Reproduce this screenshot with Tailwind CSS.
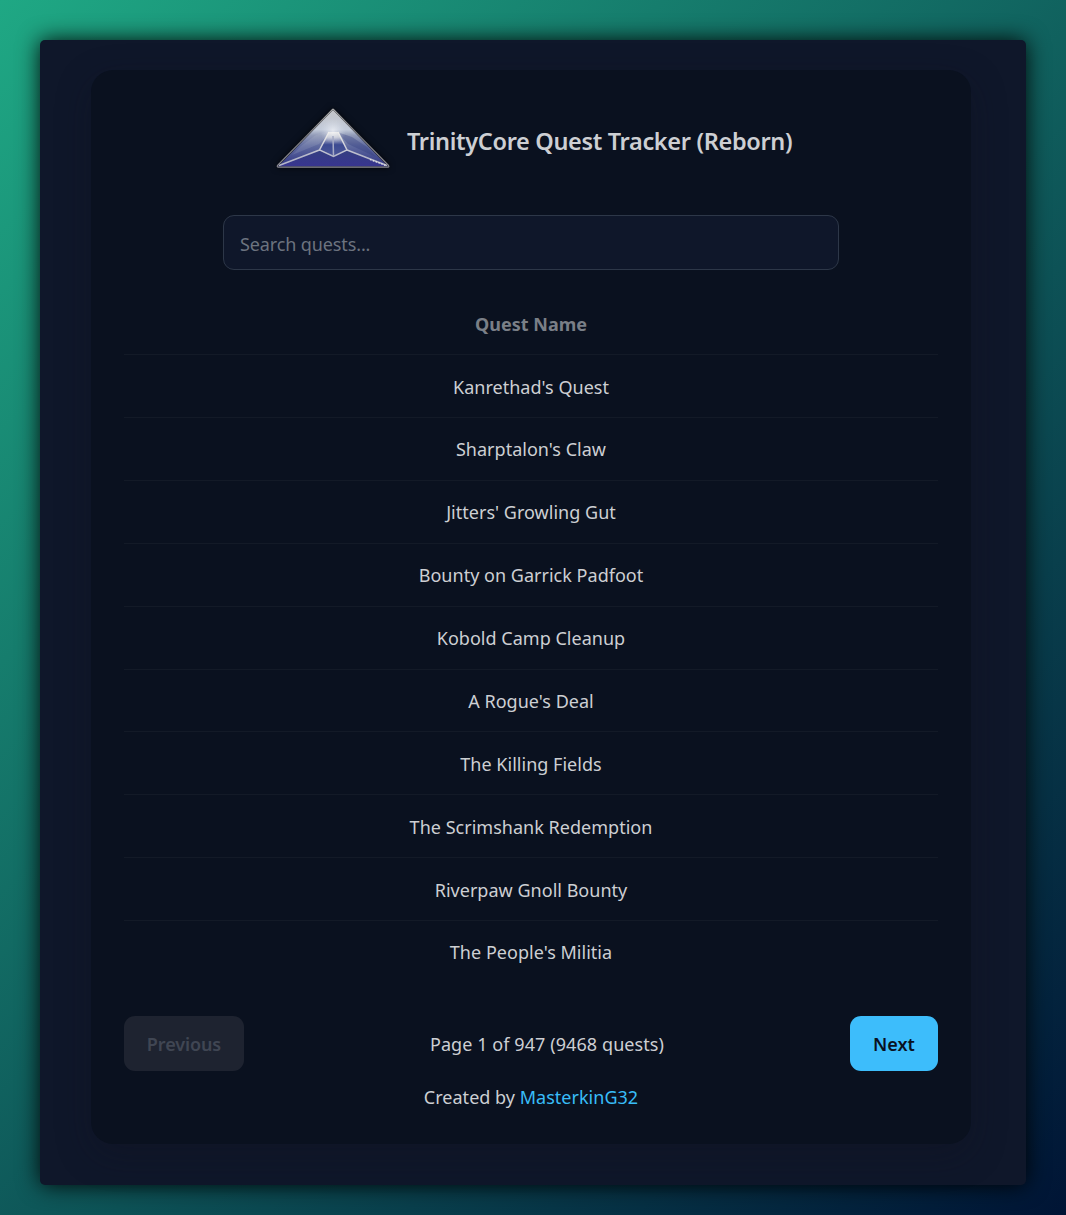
<!DOCTYPE html>
<html lang="en">
<head>
<meta charset="utf-8">
<title>TrinityCore Quest Tracker (Reborn)</title>
<script src="https://cdn.jsdelivr.net/npm/@tailwindcss/browser@4"></script>
</head>
<body class="h-[1215px] overflow-hidden bg-linear-[135deg,#1fa884,#001435] pt-10 pl-10 font-['Segoe_UI','Noto_Sans',sans-serif] text-[18px] leading-[27px] tracking-[0.02px] text-[#cdcfd3]">
<div class="h-[1145px] w-[986px] rounded-[5px] bg-[#0f172a] pt-[30px] pl-[51px] shadow-[0_0_22px_rgba(0,0,0,0.95)]">
<main class="flex h-[1074px] w-[880px] flex-col rounded-[22px] bg-[#0a111f] px-[33px] shadow-[0_11px_34px_rgba(18,16,32,0.35)]">
<header class="flex h-[145px] shrink-0 items-start pt-[34px] pl-[149px]">
<svg class="h-[70px] w-[120px] shrink-0 drop-shadow-[0_0_3px_rgba(0,0,0,0.8)]" viewBox="0 0 120 70" fill="none">
<defs>
<linearGradient id="face" x1="0" y1="5" x2="0" y2="62" gradientUnits="userSpaceOnUse"><stop stop-color="#c4c4c6"/><stop offset=".36" stop-color="#c3cbda"/><stop offset=".46" stop-color="#929bb8"/><stop offset=".65" stop-color="#5f6a9f"/><stop offset="1" stop-color="#303583"/></linearGradient>
<linearGradient id="base" x1="0" y1="46" x2="0" y2="63" gradientUnits="userSpaceOnUse"><stop stop-color="#343e80"/><stop offset="1" stop-color="#383590"/></linearGradient>
<linearGradient id="core" x1="0" y1="27" x2="0" y2="52" gradientUnits="userSpaceOnUse"><stop stop-color="#efeeea"/><stop offset=".25" stop-color="#c3c6d3"/><stop offset=".55" stop-color="#3c4a91"/><stop offset="1" stop-color="#4c5698"/></linearGradient>
<radialGradient id="glow" cx="60" cy="27" r="13" gradientUnits="userSpaceOnUse"><stop stop-color="#fff" stop-opacity=".6"/><stop offset="1" stop-color="#dce2ee" stop-opacity="0"/></radialGradient>
<linearGradient id="edge" x1="0" y1="5" x2="0" y2="63" gradientUnits="userSpaceOnUse"><stop stop-color="#a9a8a7"/><stop offset=".5" stop-color="#77777c"/><stop offset="1" stop-color="#8a8990"/></linearGradient>
<linearGradient id="rib" x1="0" y1="28" x2="0" y2="53" gradientUnits="userSpaceOnUse"><stop stop-color="#f0efec"/><stop offset="1" stop-color="#b4b6c8"/></linearGradient>
</defs>
<path d="M60 6 115 62.500H5Z" fill="url(#face)"/>
<path d="M58 27 43 31 28 42 19 51 46 40Z" fill="#c7cee0" opacity=".15"/>
<path d="M64 28 79 33 94 43 103 53 75 40Z" fill="#303d7d" opacity=".35"/>
<path d="M5 62 46.500 46 60 52.500 74 46 115 62Z" fill="url(#base)"/>
<path d="M56 28H65L74 46 60.500 52.500 46.500 46Z" fill="url(#core)"/>
<path d="M60 6 115 62.500H5Z" fill="url(#glow)"/>
<path d="M56 28 46.500 46 60.500 52.500 74 46 65 28M46.500 46 6 61.500M74 46 114 61.500" stroke="url(#rib)" stroke-width="1.500"/>
<path d="M60 32 60.500 52" stroke="#a5aac5" stroke-width="1.500"/>
<path d="M97 55.500 113 61.500" stroke="#e4e3e6" stroke-width="1.300" stroke-dasharray="1.500 1.500"/>
<path d="M60.500 5.500 115.500 61.500Q116.500 63 115 63.200H5Q3.500 62.500 5 61L59.500 5.500Q60 5 60.500 5.500Z" stroke="url(#edge)" stroke-width="1.200"/>
</svg>
<h1 class="mt-[19px] ml-[14px] text-[23.5px] leading-[36px] font-semibold tracking-[-0.33px] whitespace-nowrap">TrinityCore Quest Tracker (Reborn)</h1>
</header>
<input class="mx-auto block h-[55px] w-[616px] shrink-0 rounded-[11px] border border-[#2d3748] bg-[#0f172a] px-4 pt-0.5 tracking-[-0.12px] placeholder:text-[#6c737f]" placeholder="Search quests..." aria-label="Search quests">
<table class="mt-[22px] w-full border-collapse text-center">
<thead><tr class="h-[62.850px] border-b border-[#131a27]"><th class="pt-[3px] font-bold text-[#7a7f87]">Quest Name</th></tr></thead>
<tbody>
<tr class="h-[62.850px] border-b border-[#131a27]"><td class="pt-[2px]">Kanrethad's Quest</td></tr>
<tr class="h-[62.850px] border-b border-[#131a27]"><td class="pt-[1px]">Sharptalon's Claw</td></tr>
<tr class="h-[62.850px] border-b border-[#131a27]"><td class="pt-[2px]">Jitters' Growling Gut</td></tr>
<tr class="h-[62.850px] border-b border-[#131a27]"><td class="pt-[2px]">Bounty on Garrick Padfoot</td></tr>
<tr class="h-[62.850px] border-b border-[#131a27]"><td class="pt-[2px]">Kobold Camp Cleanup</td></tr>
<tr class="h-[62.850px] border-b border-[#131a27]"><td class="pt-[2px]">A Rogue's Deal</td></tr>
<tr class="h-[62.850px] border-b border-[#131a27]"><td class="pt-[2px]">The Killing Fields</td></tr>
<tr class="h-[62.850px] border-b border-[#131a27]"><td class="pt-[2px]">The Scrimshank Redemption</td></tr>
<tr class="h-[62.850px] border-b border-[#131a27]"><td class="pt-[2px]">Riverpaw Gnoll Bounty</td></tr>
<tr class="h-[62.850px]"><td class="pt-[1px]">The People's Militia</td></tr>
</tbody>
</table>
<nav class="mt-auto flex h-[55px] shrink-0 items-center justify-between">
<button class="h-[55px] w-[120px] rounded-[11px] bg-[#1e2330] pt-0.5 font-semibold tracking-[-0.1px] text-[#404653]" disabled>Previous</button>
<span class="pt-0.5 tracking-[0.08px]">Page 1 of 947 (9468 quests)</span>
<button class="h-[55px] w-[88px] rounded-[11px] bg-[#3dbdfb] pt-0.5 font-semibold text-[#0a111f]">Next</button>
</nav>
<footer class="mt-[13px] mb-[33px] shrink-0 text-center">Created by <a class="text-[#38bdf8]" href="#">MasterkinG32</a></footer>
</main>
</div>
</body>
</html>
